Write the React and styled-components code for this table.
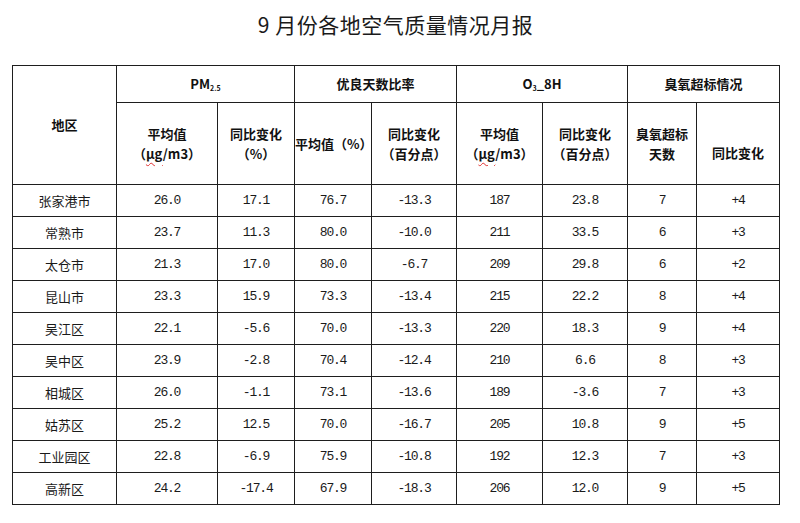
import React from "react";
import styled, { createGlobalStyle } from "styled-components";

const GlobalStyle = createGlobalStyle`
  html, body {
    margin: 0;
    padding: 0;
    background: #ffffff;
  }
  body {
    font-family: "Noto Sans CJK SC", sans-serif;
    color: #111;
  }
`;

const Page = styled.div`
  width: 800px;
  height: 523px;
  padding: 0 0 0 12px;
  box-sizing: border-box;
  overflow: hidden;
`;

const Title = styled.h1`
  margin: 0;
  padding-top: 9px;
  height: 56px;
  box-sizing: border-box;
  width: 767px;
  text-align: center;
  font-family: "Noto Sans CJK SC", sans-serif;
  font-weight: 400;
  font-size: 21px;
  line-height: 30px;
  color: #1a1a1a;
  letter-spacing: 0.5px;
`;

const Table = styled.table`
  border-collapse: collapse;
  table-layout: fixed;
  width: 767px;
  margin-top: 9px;
`;

const Col = styled.col`
  width: ${(p) => p.$w}px;
`;

const Th = styled.th`
  border: 1px solid #1e1e1e;
  padding: 0;
  padding-top: ${(p) => (p.$low ? "18px" : "0")};
  height: ${(p) => p.$h}px;
  font-family: "Noto Sans CJK SC", sans-serif;
  font-weight: 700;
  font-size: 13px;
  line-height: 20px;
  text-align: center;
  vertical-align: middle;
  color: #111;
  box-sizing: border-box;
`;

const Td = styled.td`
  border: 1px solid #1e1e1e;
  padding: 0;
  height: 32px;
  text-align: center;
  vertical-align: middle;
  font-family: ${(p) =>
    p.$name ? `"Noto Sans CJK SC", sans-serif` : `"Liberation Mono", "Noto Sans CJK SC", monospace`};
  font-size: 13px;
  letter-spacing: ${(p) => (p.$name ? "0" : "-1.2px")};
  color: #1a1a1a;
  box-sizing: border-box;
`;

const Sub = styled.sub`
  font-size: 7px;
  vertical-align: -2px;
  line-height: 0;
`;

const Squiggle = styled.span`
  text-decoration: underline wavy #e03030;
  text-decoration-thickness: 1px;
  text-underline-offset: 3px;
`;

const cols = [104, 101, 77, 77, 85, 86, 85, 69, 83];

const rows = [
  ["张家港市", "26.0", "17.1", "76.7", "-13.3", "187", "23.8", "7", "+4"],
  ["常熟市", "23.7", "11.3", "80.0", "-10.0", "211", "33.5", "6", "+3"],
  ["太仓市", "21.3", "17.0", "80.0", "-6.7", "209", "29.8", "6", "+2"],
  ["昆山市", "23.3", "15.9", "73.3", "-13.4", "215", "22.2", "8", "+4"],
  ["吴江区", "22.1", "-5.6", "70.0", "-13.3", "220", "18.3", "9", "+4"],
  ["吴中区", "23.9", "-2.8", "70.4", "-12.4", "210", "6.6", "8", "+3"],
  ["相城区", "26.0", "-1.1", "73.1", "-13.6", "189", "-3.6", "7", "+3"],
  ["姑苏区", "25.2", "12.5", "70.0", "-16.7", "205", "10.8", "9", "+5"],
  ["工业园区", "22.8", "-6.9", "75.9", "-10.8", "192", "12.3", "7", "+3"],
  ["高新区", "24.2", "-17.4", "67.9", "-18.3", "206", "12.0", "9", "+5"],
];

const Unit = () => (
  <>
    （<Squiggle>μg</Squiggle>/m3）
  </>
);

export default function App() {
  return (
    <Page>
      <GlobalStyle />
      <Title>9 月份各地空气质量情况月报</Title>
      <Table>
        <colgroup>
          {cols.map((w, i) => (
            <Col key={i} $w={w} />
          ))}
        </colgroup>
        <thead>
          <tr>
            <Th rowSpan={2}>地区</Th>
            <Th colSpan={2} $h={37}>
              PM<Sub>2.5</Sub>
            </Th>
            <Th colSpan={2}>优良天数比率</Th>
            <Th colSpan={2}>
              O<Sub>3</Sub>_8H
            </Th>
            <Th colSpan={2}>臭氧超标情况</Th>
          </tr>
          <tr>
            <Th $h={82}>
              平均值
              <br />
              <Unit />
            </Th>
            <Th>
              同比变化
              <br />
              （%）
            </Th>
            <Th>平均值（%）</Th>
            <Th>
              同比变化
              <br />
              （百分点）
            </Th>
            <Th>
              平均值
              <br />
              <Unit />
            </Th>
            <Th>
              同比变化
              <br />
              （百分点）
            </Th>
            <Th>
              臭氧超标
              <br />
              天数
            </Th>
            <Th $low>同比变化</Th>
          </tr>
        </thead>
        <tbody>
          {rows.map((r) => (
            <tr key={r[0]}>
              {r.map((v, i) => (
                <Td key={i} $name={i === 0}>
                  {v}
                </Td>
              ))}
            </tr>
          ))}
        </tbody>
      </Table>
    </Page>
  );
}
